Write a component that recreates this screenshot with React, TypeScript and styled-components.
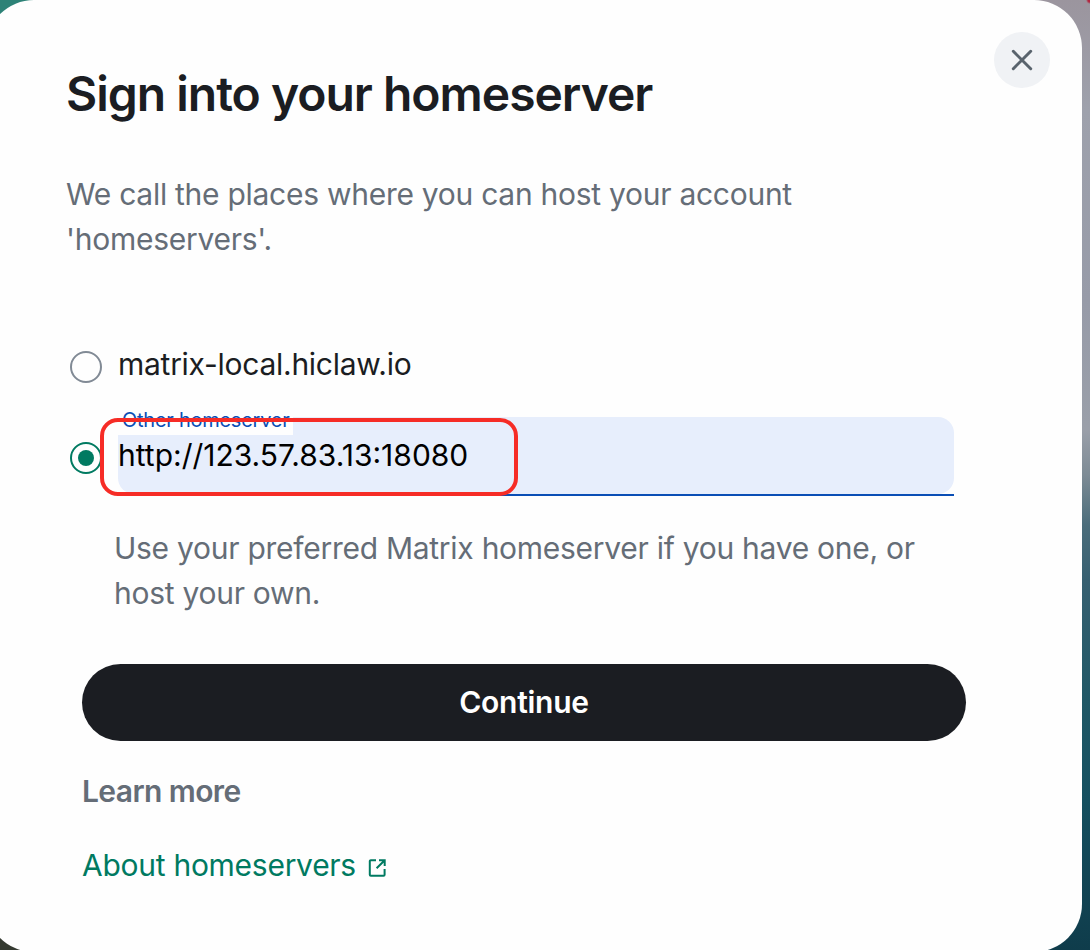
import React from "react";
import styled, { createGlobalStyle } from "styled-components";

const GlobalStyle = createGlobalStyle`
  * {
    box-sizing: border-box;
  }
  body {
    margin: 0;
    font-family: Inter, "Liberation Sans", sans-serif;
  }
  h1, h2, p {
    margin: 0;
  }
`;
const Backdrop = styled.div`
  height: 950px;
  overflow: hidden;
  background: linear-gradient(to right, #2d8277 0, #2d8277 500px, transparent 500px) 0 0 / 100% 475px no-repeat,
    linear-gradient(to right, #353a31 0, #353a31 500px, transparent 500px) 0 475px / 100% 475px no-repeat,
    radial-gradient(circle at 1090px 0, #b3263f 0, #b3263f 2px, transparent 4px),
    linear-gradient(#9b959e 0, #9ea1ac 110px, #979ba8 300px, #9a9fa9 430px, #7d8b95 475px, #4b6d7b 525px, #376071 580px, #205866 700px, #155060 800px, #0f3c4b 950px);
`;
const Dialog = styled.div`
  position: relative;
  width: 1096px;
  height: 952px;
  margin-left: -14px;
  padding: 64px 116px 0 80px;
  border-radius: 48px;
  background-color: #fefefe;
`;
const CloseButton = styled.button`
  position: absolute;
  top: 32px;
  right: 32px;
  width: 56px;
  height: 56px;
  padding: 0;
  display: flex;
  align-items: center;
  justify-content: center;
  border: none;
  border-radius: 50%;
  background-color: #f0f2f5;
`;
const Title = styled.h1`
  font-size: 48px;
  line-height: 60px;
  font-weight: 600;
  letter-spacing: -1.01px;
  color: #1b1d22;
`;
const Paragraph = styled.p`
  margin-top: 48px;
  font-size: 30px;
  line-height: 45px;
  letter-spacing: -0.27px;
  color: #656d77;
`;
const Options = styled.div`
  margin-top: 80px;
  padding-left: 4px;
`;
const Option = styled.label`
  display: flex;
  align-items: center;
  height: 45px;
  gap: 16px;
  font-size: 30px;
  color: #1b1d22;
`;
const OptionText = styled.span`
  padding-bottom: 1px;
  letter-spacing: -0.27px;
`;
const OtherOption = styled(Option)`
  position: relative;
  height: 79px;
  margin-top: 30px;
`;
const Radio = styled.span<{ $checked?: boolean }>`
  flex: none;
  width: 32px;
  height: 32px;
  margin-top: ${({ $checked }) => ($checked ? "2px" : "4px")};
  display: flex;
  align-items: center;
  justify-content: center;
  border: 2px solid ${({ $checked }) => ($checked ? "#007a61" : "#818a95")};
  border-radius: 50%;
  &::after {
    content: "";
    width: 16px;
    height: 16px;
    border-radius: 50%;
    background-color: ${({ $checked }) => ($checked ? "#007a61" : "transparent")};
  }
`;
const Field = styled.div`
  position: relative;
  width: 836px;
  height: 79px;
  border-bottom: 2px solid #0a4eb5;
`;
const Input = styled.input`
  display: block;
  width: 100%;
  height: 77px;
  padding: 0 0 1px;
  border: none;
  outline: none;
  border-radius: 16px;
  background-color: #e7eefc;
  font: inherit;
  color: #000;
`;
const FieldLabel = styled.span`
  position: absolute;
  top: -12px;
  left: 0;
  width: 175px;
  height: 30px;
  padding-left: 4px;
  background-color: #fefefe;
  font-size: 20px;
  line-height: 30px;
  letter-spacing: -0.26px;
  white-space: nowrap;
  color: #0a4eb5;
`;
// red marker drawn over the filled-in address
const Highlight = styled.div`
  position: absolute;
  top: 1px;
  left: 30px;
  width: 418px;
  height: 78px;
  border: 4px solid #f62c26;
  border-radius: 18px;
`;
const Hint = styled(Paragraph)`
  margin-top: 30px;
  padding-left: 48px;
`;
const Footer = styled.div`
  margin-top: 48px;
  padding-left: 16px;
`;
const Submit = styled.button`
  display: block;
  width: 884px;
  height: 77px;
  padding: 0 0 1px;
  border: none;
  border-radius: 39px;
  background-color: #1b1d22;
  font: 600 30px Inter, sans-serif;
  letter-spacing: -0.27px;
  color: #fff;
`;
const SubTitle = styled.h2`
  margin-top: 28px;
  font-size: 30px;
  line-height: 45px;
  font-weight: 600;
  letter-spacing: -0.6px;
  color: #656d77;
`;
const Link = styled.a`
  display: flex;
  align-items: center;
  gap: 12px;
  margin-top: 29px;
  font-size: 30px;
  line-height: 45px;
  letter-spacing: -0.27px;
  color: #007a61;
  svg {
    margin-top: 4px;
  }
`;

const App = () => {
  return (
    <Backdrop>
      <GlobalStyle />
      <Dialog>
        <CloseButton aria-label="Close">
          <svg width="22" height="22" viewBox="0 0 22 22" fill="none" stroke="#59636d" strokeWidth="3" strokeLinecap="round">
            <path d="M2.3 2.3 19.7 19.7M19.7 2.3 2.3 19.7" />
          </svg>
        </CloseButton>
        <Title>Sign into your homeserver</Title>
        <Paragraph>
          We call the places where you can host your account
          <br />
          'homeservers'.
        </Paragraph>
        <Options>
          <Option>
            <Radio />
            <OptionText>matrix-local.hiclaw.io</OptionText>
          </Option>
          <OtherOption as="div">
            <Radio $checked />
            <Field>
              <Input defaultValue="http://123.57.83.13:18080" />
              <FieldLabel>Other homeserver</FieldLabel>
            </Field>
            <Highlight />
          </OtherOption>
        </Options>
        <Hint>
          Use your preferred Matrix homeserver if you have one, or
          <br />
          host your own.
        </Hint>
        <Footer>
          <Submit>Continue</Submit>
          <SubTitle>Learn more</SubTitle>
          <Link>
            About homeservers
            <svg width="18" height="18" viewBox="0 0 18 18" fill="none" stroke="currentColor" strokeWidth="2">
              <path d="M8 1.2H2.8a1 1 0 0 0-1 1v13.6a1 1 0 0 0 1 1h12.8a1 1 0 0 0 1-1V10" />
              <path d="M11 1.2h5.7v5.7M16.2 1.7 8.6 9.3" />
            </svg>
          </Link>
        </Footer>
      </Dialog>
    </Backdrop>
  );
};

export default App;
